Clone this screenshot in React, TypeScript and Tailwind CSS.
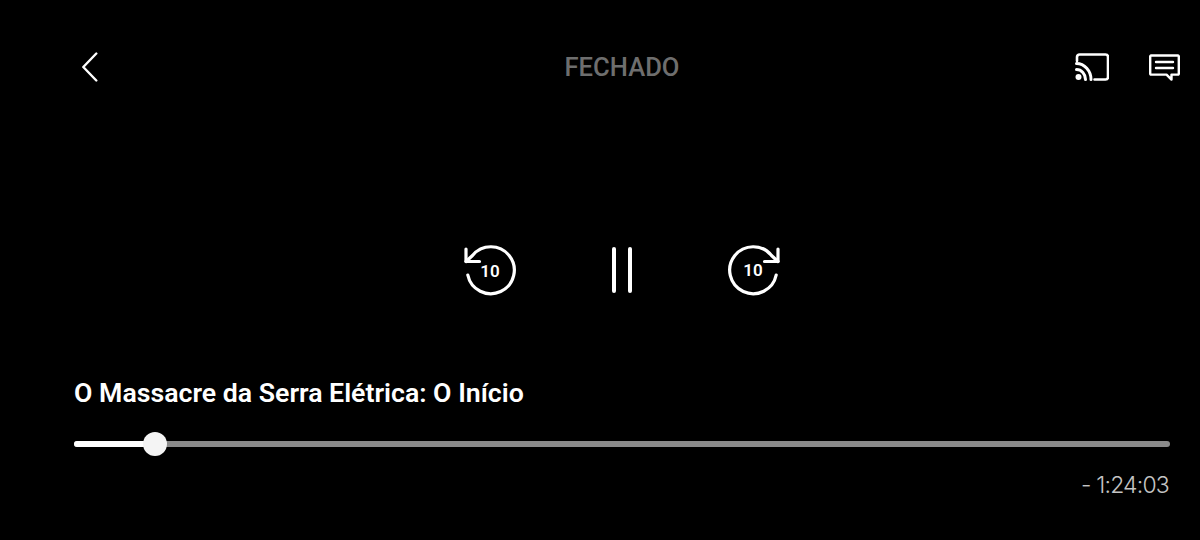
import React from 'react';

const BackIcon = () => (
  <svg width="16" height="30" viewBox="0 0 16 30" fill="none" stroke="currentColor" strokeWidth="2.4" strokeLinecap="round" strokeLinejoin="round">
    <path d="M14.3 1.5 1.3 15l13 13.5" />
  </svg>
);

const CastIcon = () => (
  <svg width="34" height="28" viewBox="0 0 34 28" fill="none" stroke="currentColor" strokeWidth="2.6" strokeLinecap="round" strokeLinejoin="round">
    <path d="M2 8V4a2.5 2.5 0 0 1 2.5-2.500h26A2.500 2.500 0 0 1 33 4v20a2.500 2.500 0 0 1-2.500 2.500H19.500" />
    <path d="M1.500 10.500C9.500 10.500 16 18 16 26.500" strokeWidth="3" />
    <path d="M1.500 16.500C6.500 16.500 10.500 21 10.500 26.500" strokeWidth="3" />
    <circle cx="3.500" cy="24" r="3" fill="currentColor" stroke="none" />
  </svg>
);

const CommentIcon = () => (
  <svg width="31" height="27" viewBox="0 0 31 27" fill="none" stroke="currentColor" strokeWidth="2.4" strokeLinejoin="round" strokeLinecap="round">
    <path d="M2 1.500h27a.8.8 0 0 1 .8.8v17.500a.8.8 0 0 1-.8.8h-6.500v5l-5-5H2a.8.8 0 0 1-.8-.8V2.300a.8.8 0 0 1 .8-.8Z" />
    <path d="M7 8h17M7 14h17" />
  </svg>
);

const SkipIcon = ({ forward }: { forward?: boolean }) => (
  <div className="relative w-[52px] h-[54px]">
    <svg width="52" height="54" viewBox="0 0 52 54" fill="none" stroke="currentColor" strokeWidth="3.2" strokeLinecap="round" strokeLinejoin="round" className={forward ? '-scale-x-100 overflow-visible' : 'overflow-visible'}>
      <path d="M1 18.500 7.500 12.500A23.500 23.500 0 1 1 2.800 32" />
      <path d="M1 6V18.500H14.500" />
    </svg>
    <span className={forward ? "absolute inset-0 pt-[17px] text-center text-[17px] leading-[20px] font-semibold font-['Roboto',sans-serif]" : "absolute inset-0 pt-[18px] pr-[2px] text-center text-[17px] leading-[20px] font-semibold font-['Roboto',sans-serif]"}>10</span>
  </div>
);

const App: React.FC = () => {
  return (
    <div className="w-[1200px] h-[540px] bg-black text-white overflow-hidden flex flex-col">
      <div className="flex items-center justify-between h-[134px] pl-[82px] pr-[20px]">
        <div className="w-[87px]"><BackIcon /></div>
        <span className="text-[25.6px] font-medium text-[#6e6e6e] font-['Roboto',sans-serif]">FECHADO</span>
        <div className="flex items-center gap-[40px]">
          <CastIcon />
          <CommentIcon />
        </div>
      </div>

      <div className="flex items-center justify-center gap-[95px] h-[134px] mt-[69px] pl-[44px]">
        <SkipIcon />
        <div className="flex gap-[12px]">
          <div className="w-[4px] h-[46px] bg-white rounded-full" />
          <div className="w-[4px] h-[46px] bg-white rounded-full" />
        </div>
        <SkipIcon forward />
      </div>

      <div className="pl-[74px] pr-[30px] pt-[40px]">
        <h1 className="text-[26.7px] leading-[32px] font-semibold font-['Roboto',sans-serif]">O Massacre da Serra Elétrica: O Início</h1>
        <div className="relative mt-[32px] h-[6px] rounded-full bg-[#8a8a8a]">
          <div className="h-full w-[80px] rounded-full bg-white" />
          <div className="absolute left-[69px] top-[-9px] w-[24px] h-[24px] rounded-full bg-[#f4f4f4]" />
        </div>
        <div className="mt-[23px] pr-[1px] text-right text-[23px] leading-[30px] font-light tracking-[-0.8px] text-[#c4c4c4] font-['Inter',sans-serif]">- 1:24:03</div>
      </div>
    </div>
  );
};

export default App;
